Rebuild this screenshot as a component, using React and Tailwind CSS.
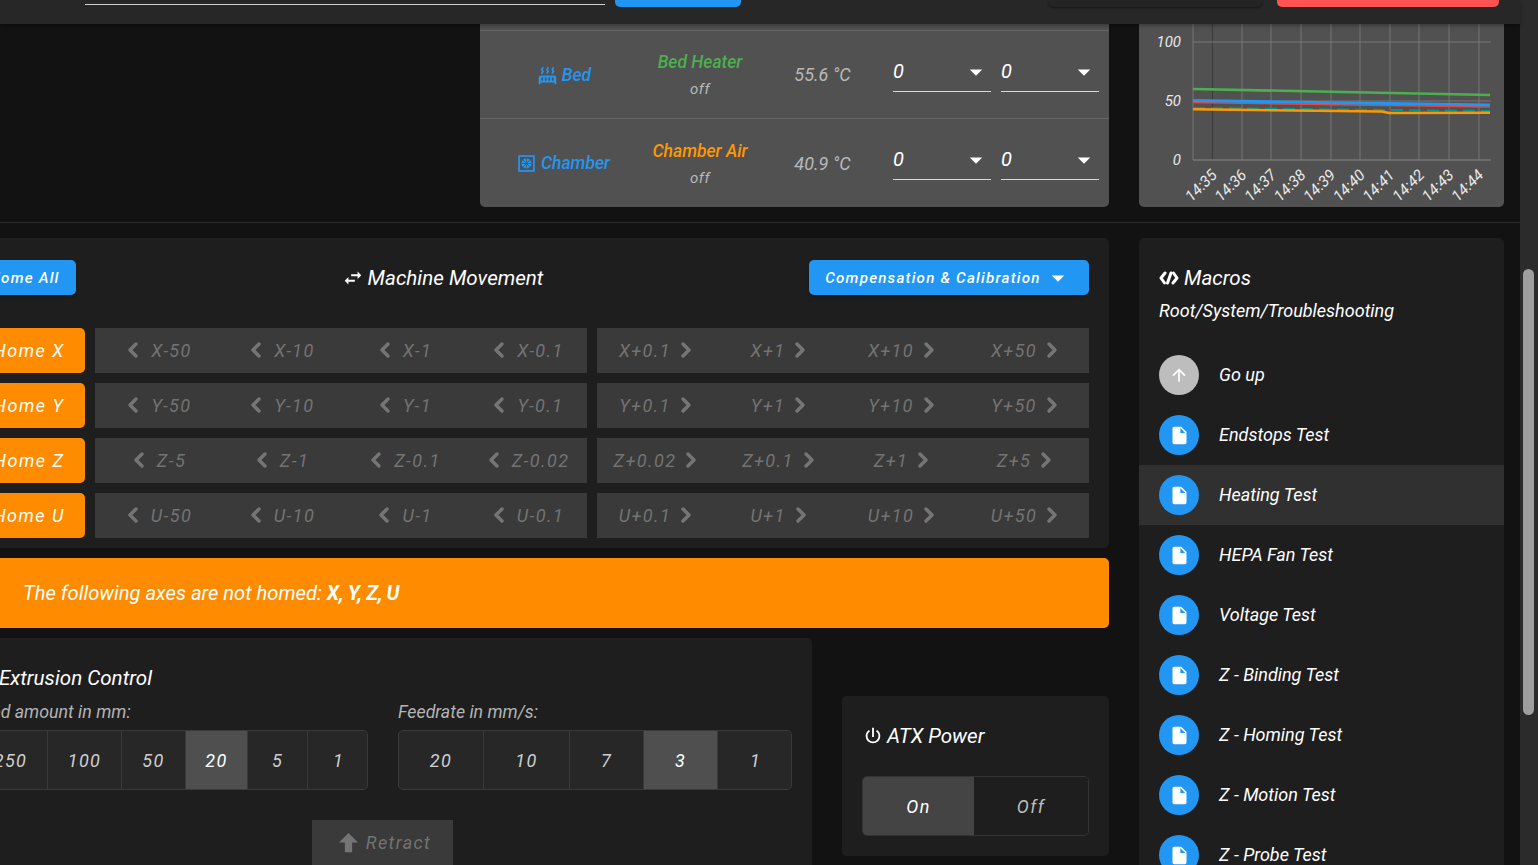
import { ChevronLeft, ChevronRight } from 'lucide-react'

const font = { fontFamily: 'Roboto, sans-serif' }

const MDI = {
  radiator: 'M7.95,3L6.53,5.19L7.95,7.4H7.94L5.95,10.5L4.22,9.6L5.64,7.39L4.22,5.19L6.22,2.09L7.95,3M13.95,2.89L12.53,5.1L13.95,7.3L13.94,7.31L11.95,10.4L10.22,9.5L11.64,7.3L10.22,5.1L12.22,2L13.95,2.89M20,2.89L18.56,5.1L20,7.3V7.31L18,10.4L16.25,9.5L17.67,7.3L16.25,5.1L18.25,2L20,2.89M2,22V14A2,2 0 0,1 4,12H20A2,2 0 0,1 22,14V22H20V20H4V22H2M6,14A1,1 0 0,0 5,15V17A1,1 0 0,0 6,18A1,1 0 0,0 7,17V15A1,1 0 0,0 6,14M10,14A1,1 0 0,0 9,15V17A1,1 0 0,0 10,18A1,1 0 0,0 11,17V15A1,1 0 0,0 10,14M14,14A1,1 0 0,0 13,15V17A1,1 0 0,0 14,18A1,1 0 0,0 15,17V15A1,1 0 0,0 14,14M18,14A1,1 0 0,0 17,15V17A1,1 0 0,0 18,18A1,1 0 0,0 19,17V15A1,1 0 0,0 18,14Z',
  swap: 'M21,9L17,5V8H10V10H17V13M7,11L3,15L7,19V16H14V14H7V11Z',
  power: 'M16.56,5.44L15.11,6.89C16.84,7.94 18,9.83 18,12A6,6 0 0,1 12,18A6,6 0 0,1 6,12C6,9.83 7.16,7.94 8.88,6.88L7.44,5.44C5.36,6.88 4,9.28 4,12A8,8 0 0,0 12,20A8,8 0 0,0 20,12C20,9.28 18.64,6.88 16.56,5.44M13,3H11V13H13',
  up: 'M13,20H11V8L5.5,13.5L4.08,12.08L12,4.16L19.92,12.08L18.5,13.5L13,8V20Z',
  file: 'M13,9V3.5L18.5,9M6,2C4.89,2 4,2.89 4,4V20A2,2 0 0,0 6,22H18A2,2 0 0,0 20,20V8L14,2H6Z',
  upBold: 'M15,20H9V12H4.16L12,4.16L19.84,12H15V20Z',
  menuDown: 'M7,10L12,15L17,10H7Z',
  alert: 'M12,2A10,10 0 1,0 22,12A10,10 0 0,0 12,2Z',
}

function Icon({ d, className }) {
  return (
    <svg viewBox="0 0 24 24" className={className} fill="currentColor">
      <path d={d} />
    </svg>
  )
}

function ChamberIcon() {
  return (
    <svg viewBox="0 0 16 16" className="w-[17px] h-[17px] mr-[2px] text-[#2196f3] shrink-0" fill="none" stroke="currentColor">
      <rect x="1" y="1" width="14" height="14" strokeWidth="1.6" />
      <circle cx="8" cy="8" r="4.8" fill="currentColor" stroke="none" />
      <path d="M8 3.2V12.8M3.2 8H12.8M4.6 4.6L11.4 11.4M11.4 4.6L4.6 11.4" stroke="#515151" strokeWidth="0.7" />
    </svg>
  )
}

function MacrosIcon() {
  return (
    <svg viewBox="0 0 20 14" className="w-[20px] h-[14px] text-white" fill="none" stroke="currentColor" strokeWidth="3" strokeLinejoin="round" strokeLinecap="round">
      <path d="M6 2L2 7L5.5 12" />
      <path d="M14.5 2L18 7L14 12" />
      <path d="M12 2L8.5 12" />
    </svg>
  )
}

const moveRows = [
  { axis: 'X', left: ['X-50', 'X-10', 'X-1', 'X-0.1'], right: ['X+0.1', 'X+1', 'X+10', 'X+50'] },
  { axis: 'Y', left: ['Y-50', 'Y-10', 'Y-1', 'Y-0.1'], right: ['Y+0.1', 'Y+1', 'Y+10', 'Y+50'] },
  { axis: 'Z', left: ['Z-5', 'Z-1', 'Z-0.1', 'Z-0.02'], right: ['Z+0.02', 'Z+0.1', 'Z+1', 'Z+5'] },
  { axis: 'U', left: ['U-50', 'U-10', 'U-1', 'U-0.1'], right: ['U+0.1', 'U+1', 'U+10', 'U+50'] },
]

const macros = ['Endstops Test', 'Heating Test', 'HEPA Fan Test', 'Voltage Test', 'Z - Binding Test', 'Z - Homing Test', 'Z - Motion Test', 'Z - Probe Test']

function Select() {
  return (
    <div className="w-[98px] h-[41px] border-b border-[#d8d8d8] flex items-start justify-between pt-[7px] pr-[7px]">
      <span className="text-[20px] leading-[26px] text-white">0</span>
      <Icon d={MDI.menuDown} className="w-[30px] h-[30px] text-white -mr-[7px] -mt-[1px]" />
    </div>
  )
}

function TempRow({ icon, name, tool, toolColor, temp, className, selectsClass, nameClass }) {
  return (
    <div className={`flex items-center ${className}`}>
      <div className={`w-[168px] flex items-center justify-center gap-[4px] text-[#2196f3] text-[17.5px] font-medium ${nameClass}`}>
        {icon}
        <span>{name}</span>
      </div>
      <div className="w-[104px] flex flex-col items-center whitespace-nowrap">
        <span className={`text-[17.5px] font-medium leading-[24px] ${toolColor}`}>{tool}</span>
        <span className="text-[15px] leading-[20px] mt-[5px] text-[#b9b9b9] tracking-[0.5px]">off</span>
      </div>
      <div className="w-[141px] text-center text-[18px] text-[#b9b9b9]">{temp}</div>
      <div className={`flex gap-[10px] ${selectsClass}`}>
        <Select />
        <Select />
      </div>
    </div>
  )
}

function Chart() {
  const xs = [54, 103, 132, 162, 192, 221, 251, 280, 310, 340]
  const labels = ['14:35', '14:36', '14:37', '14:38', '14:39', '14:40', '14:41', '14:42', '14:43', '14:44']
  return (
    <svg width="365" height="183" className="block" style={font}>
      {xs.map(x => (
        <line key={x} x1={x} x2={x} y1="0" y2="136" stroke="#767676" strokeWidth="1" />
      ))}
      <line x1="73.5" x2="73.5" y1="0" y2="136" stroke="#3a3a3a" strokeWidth="1" />
      <line x1="54" x2="352" y1="18" y2="18" stroke="#767676" />
      <line x1="54" x2="352" y1="77" y2="77" stroke="#767676" />
      <line x1="54" x2="352" y1="136" y2="136" stroke="#8a8a8a" />
      <text x="42" y="23" textAnchor="end" fontSize="15" fontStyle="italic" fill="#e8e8e8">100</text>
      <text x="42" y="82" textAnchor="end" fontSize="15" fontStyle="italic" fill="#e8e8e8">50</text>
      <text x="42" y="141" textAnchor="end" fontSize="15" fontStyle="italic" fill="#e8e8e8">0</text>
      <polyline points="54,65 351,71" fill="none" stroke="#4caf50" strokeWidth="2.6" />
      <polyline points="54,78.5 351,83" fill="none" stroke="#f44336" strokeWidth="1.5" />
      <polyline points="54,76.5 351,81" fill="none" stroke="#2196f3" strokeWidth="3" />
      <polyline points="54,84 351,87" fill="none" stroke="#009688" strokeWidth="2" strokeDasharray="12 6" />
      <polyline points="54,85.3 243,87.5 250,89 351,88.7" fill="none" stroke="#ff9800" strokeWidth="2.6" />
      {labels.map((t, i) => {
        const x = 79 + i * 29.6
        return (
          <text key={t} x={x} y="152" textAnchor="end" fontSize="15.5" fontStyle="italic" fill="#e8e8e8" transform={`rotate(-45 ${x} 152)`}>{t}</text>
        )
      })}
    </svg>
  )
}

function MoveButton({ label, side }) {
  return (
    <div className={`flex-1 flex items-center justify-center text-[18px] tracking-[1.4px] text-[#737373] whitespace-nowrap ${side === 'left' ? 'gap-[6px]' : 'gap-[3px]'}`}>
      {side === 'left' && <ChevronLeft size={24} strokeWidth={3.5} className="text-[#757575] -mt-[2px]" />}
      <span>{label}</span>
      {side === 'right' && <ChevronRight size={24} strokeWidth={3.5} className="text-[#757575] -mt-[2px]" />}
    </div>
  )
}

function ToggleGroup({ items, active }) {
  return (
    <div className="flex h-[60px] border border-[#3a3a3a] rounded-[5px] overflow-hidden bg-[#272727]">
      {items.map(([v, w], i) => (
        <div key={v} style={{ width: w }} className={`flex items-center justify-center pt-[1px] text-[18px] tracking-[1.4px] shrink-0 ${i ? 'border-l border-[#3a3a3a]' : ''} ${v === active ? 'bg-[#4f4f4f] text-white' : 'text-[#cfcfcf]'}`}>
          {v}
        </div>
      ))}
    </div>
  )
}

export default function App() {
  return (
    <div className="w-[1538px] h-[865px] overflow-hidden flex bg-[#121212] italic" style={font}>
      <div className="w-[1520px] shrink-0 flex flex-col">
        {/* top bar, scrolled almost out of view */}
        <div className="h-[24px] shrink-0 bg-[#272727] flex items-start relative z-10 shadow-[0_2px_4px_rgba(0,0,0,0.3)]">
          <div className="w-[520px] ml-[85px] h-[5px] border-b border-[#cfcfcf]" />
          <div className="w-[126px] ml-[10px] h-[7px] bg-[#2196f3] rounded-b-[5px]" />
          <div className="w-[214px] ml-[307px] h-[7px] bg-[#242424] rounded-b-[5px] shadow-[0_1px_2px_rgba(0,0,0,0.4)]" />
          <div className="w-[222px] ml-[15px] h-[7px] bg-[#ff5252] rounded-b-[5px]" />
        </div>

        <div className="flex flex-col flex-1 min-h-0">
          {/* temperatures and chart */}
          <div className="flex h-[183px] shrink-0 pl-[480px] gap-[30px]">
            <div className="w-[629px] bg-[#515151] rounded-b-[5px] pt-[6px] overflow-hidden">
              <div className="border-t border-[#666666]">
                <TempRow
                  className="h-[87px]"
                  selectsClass="-mt-[6px]"
                  nameClass="pt-[2px]"
                  icon={<Icon d={MDI.radiator} className="w-[21px] h-[21px] shrink-0" />}
                  name="Bed"
                  tool="Bed Heater"
                  toolColor="text-[#4caf50]"
                  temp="55.6 °C"
                />
              </div>
              <TempRow
                className="h-[89px] border-t border-[#666666]"
                selectsClass="-mt-[8px]"
                nameClass="pt-[1px]"
                icon={<ChamberIcon />}
                name="Chamber"
                tool="Chamber Air"
                toolColor="text-[#ff9800]"
                temp="40.9 °C"
              />
            </div>
            <div className="w-[365px] bg-[#515151] rounded-b-[5px] overflow-hidden">
              <Chart />
            </div>
          </div>

          <div className="h-[16px] shrink-0 border-b border-[#2c2c2c]" />

          <div className="flex flex-1 min-h-0 pt-[15px] gap-[30px]">
            {/* left column, cut off by horizontal scroll */}
            <div className="w-[1156px] -ml-[47px] shrink-0 flex flex-col">
              <div className="bg-[#1e1e1e] rounded-[5px] h-[310px] px-[20px] pt-[22px] shrink-0">
                <div className="flex items-center h-[35px]">
                  <div className="w-[103px] h-[35px] pt-[1px] bg-[#2196f3] rounded-[5px] text-white text-[15.2px] font-medium tracking-[1.2px] flex items-center justify-center shadow-[0_2px_3px_rgba(0,0,0,0.3)]">
                    Home All
                  </div>
                  <div className="flex-1 flex items-center justify-center gap-[4px] pt-[1px] text-white text-[20.6px]">
                    <Icon d={MDI.swap} className="w-[22px] h-[22px]" />
                    <span>Machine Movement</span>
                  </div>
                  <div className="w-[280px] h-[35px] bg-[#2196f3] rounded-[5px] text-white text-[15.2px] font-medium tracking-[1.2px] flex items-center justify-center gap-[2px] shadow-[0_2px_3px_rgba(0,0,0,0.3)]">
                    <span className="pt-[1px]">Compensation &amp; Calibration</span>
                    <Icon d={MDI.menuDown} className="w-[30px] h-[30px]" />
                  </div>
                </div>
                <div className="flex flex-col gap-[10px] mt-[33px]">
                  {moveRows.map(r => (
                    <div key={r.axis} className="flex gap-[10px] h-[45px]">
                      <div className="w-[112px] bg-[#ff8c00] rounded-[5px] text-white text-[18px] tracking-[1.5px] flex items-center justify-center shrink-0">
                        Home {r.axis}
                      </div>
                      <div className="w-[492px] bg-[#3a3a3a] flex">
                        {r.left.map(l => <MoveButton key={l} label={l} side="left" />)}
                      </div>
                      <div className="w-[492px] bg-[#3a3a3a] flex">
                        {r.right.map(l => <MoveButton key={l} label={l} side="right" />)}
                      </div>
                    </div>
                  ))}
                </div>
              </div>

              <div className="mt-[10px] h-[70px] shrink-0 bg-[#ff8c00] rounded-[5px] flex items-center pl-[24px] gap-[22px] text-white text-[20.15px]">
                <Icon d={MDI.alert} className="w-[24px] h-[24px] shrink-0" />
                <span>The following axes are not homed: <strong className="font-bold tracking-[-0.4px]">X, Y, Z, U</strong></span>
              </div>

              <div className="flex mt-[10px] gap-[30px] flex-1 min-h-0">
                <div className="w-[859px] shrink-0 bg-[#1e1e1e] rounded-t-[5px] pl-[20px] overflow-hidden">
                  <div className="text-white text-[20.6px] mt-[27px] leading-[26px] pl-[26px]">Extrusion Control</div>
                  <div className="flex gap-[30px] mt-[9px]">
                    <div className="w-[395px] shrink-0">
                      <div className="text-[#b4b4b4] text-[17.8px] leading-[24px] mb-[6px] whitespace-nowrap">Feed amount in mm:</div>
                      <ToggleGroup
                        items={[['250', 73], ['100', 74], ['50', 64], ['20', 62], ['5', 60], ['1', 62]]}
                        active="20"
                      />
                    </div>
                    <div className="w-[394px] shrink-0">
                      <div className="text-[#b4b4b4] text-[17.8px] leading-[24px] mb-[6px] whitespace-nowrap">Feedrate in mm/s:</div>
                      <ToggleGroup
                        items={[['20', 84], ['10', 86], ['7', 74], ['3', 74], ['1', 76]]}
                        active="3"
                      />
                    </div>
                  </div>
                  <div className="flex mt-[30px] pl-[339px]">
                    <div className="w-[141px] h-[45px] bg-[#3a3a3a] flex items-center justify-center gap-[3px] text-[#737373] text-[18px] tracking-[1.4px]">
                      <Icon d={MDI.upBold} className="w-[29px] h-[29px] text-[#757575]" />
                      <span>Retract</span>
                    </div>
                  </div>
                </div>

                <div className="w-[267px] h-[160px] mt-[58px] bg-[#1e1e1e] rounded-[5px] px-[20px] shrink-0">
                  <div className="flex items-center gap-[3px] text-white text-[20.6px] pt-[27px] leading-[26px]">
                    <Icon d={MDI.power} className="w-[22px] h-[22px]" />
                    ATX Power
                  </div>
                  <div className="flex mt-[27px] h-[60px] border border-[#333333] rounded-[5px] overflow-hidden text-[18px] tracking-[1.4px]">
                    <div className="w-[111px] pt-[1px] bg-[#444444] text-white flex items-center justify-center">On</div>
                    <div className="flex-1 pt-[1px] bg-[#1e1e1e] text-[#bdbdbd] flex items-center justify-center">Off</div>
                  </div>
                </div>
              </div>
            </div>

            {/* macros */}
            <div className="w-[365px] shrink-0 bg-[#1e1e1e] rounded-t-[5px] overflow-hidden">
              <div className="flex items-center gap-[5px] px-[20px] pt-[27px] text-white text-[20.6px] leading-[26px]">
                <MacrosIcon />
                Macros
              </div>
              <div className="px-[20px] mt-[8px] text-[18px] leading-[24px] text-white whitespace-nowrap">Root/System/Troubleshooting</div>
              <div className="mt-[22px]">
                <div className="h-[60px] flex items-center px-[20px] gap-[20px] text-[18px] text-white">
                  <div className="w-[40px] h-[40px] rounded-full bg-[#bdbdbd] flex items-center justify-center">
                    <Icon d={MDI.up} className="w-[20px] h-[20px] text-white" />
                  </div>
                  <span className="-mt-[1px]">Go up</span>
                </div>
                {macros.map(m => (
                  <div key={m} className={`h-[60px] flex items-center px-[20px] gap-[20px] text-[18px] text-white ${m === 'Heating Test' ? 'bg-[#303030]' : ''}`}>
                    <div className="w-[40px] h-[40px] rounded-full bg-[#2196f3] flex items-center justify-center shrink-0">
                      <Icon d={MDI.file} className="w-[21px] h-[21px] text-white" />
                    </div>
                    <span className="-mt-[1px]">{m}</span>
                  </div>
                ))}
              </div>
            </div>
          </div>
        </div>
      </div>

      {/* page scrollbar */}
      <div className="w-[18px] shrink-0 bg-[#2b2b2b] pt-[269px] pl-[3px]">
        <div className="w-[11px] h-[446px] rounded-full bg-[#9e9e9e]" />
      </div>
    </div>
  )
}
